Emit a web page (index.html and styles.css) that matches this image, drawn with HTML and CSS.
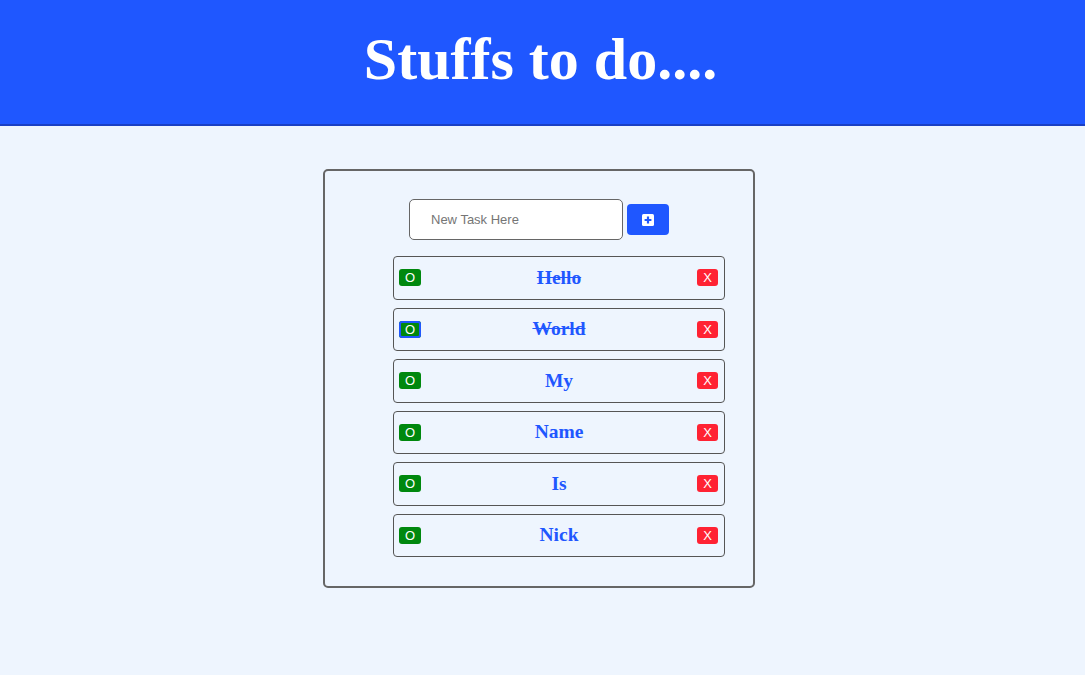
FILE: index.html
```html
<!DOCTYPE html>
<html>
<head>
<meta charset="utf-8">
<title>Stuffs to do</title>
<link rel="stylesheet" href="styles.css">
</head>
<body>
<header class="top">
  <h1 class="title">Stuffs to do....</h1>
</header>
<main class="box">
  <form class="add">
    <input class="task-input" type="text" placeholder="New Task Here">
    <button class="add-btn" type="button" aria-label="add">
      <svg width="12" height="12" viewBox="0 0 12 12"><rect x="0" y="0" width="12" height="12" rx="1.5" fill="#fff"/><path d="M6 2.6v6.8M2.6 6h6.8" stroke="#1f57ff" stroke-width="2.2"/></svg>
    </button>
  </form>
  <ul class="list">
    <li class="item"><button class="done">O</button><span class="label struck">Hello</span><button class="del">X</button></li>
    <li class="item"><button class="done focus">O</button><span class="label struck">World</span><button class="del">X</button></li>
    <li class="item"><button class="done">O</button><span class="label">My</span><button class="del">X</button></li>
    <li class="item"><button class="done">O</button><span class="label">Name</span><button class="del">X</button></li>
    <li class="item"><button class="done">O</button><span class="label">Is</span><button class="del">X</button></li>
    <li class="item"><button class="done">O</button><span class="label">Nick</span><button class="del">X</button></li>
  </ul>
</main>
</body>
</html>
```

FILE: styles.css
```css
html, body {
  margin: 0;
  padding: 0;
}
body {
  background: #eef5fe;
  font-family: "Liberation Serif", "Times New Roman", serif;
  min-height: 675px;
}
.top {
  background: #1f57ff;
  height: 124px;
  border-bottom: 2px solid #1a40c4;
  display: flex;
  align-items: center;
  justify-content: center;
}
.title {
  margin: 0 0 6px 0;
  color: #fff;
  font-size: 60px;
  font-weight: bold;
  line-height: 1;
  transform: translateX(-2px);
}
.box {
  width: 428px;
  margin: 43px 0 0 calc(50% - 219.5px);
  border: 2px solid #666;
  border-radius: 5px;
  padding: 28px 0 28.5px 0;
  box-sizing: content-box;
}
.add {
  display: flex;
  justify-content: center;
  align-items: center;
  gap: 4px;
}
.task-input {
  width: 214px;
  height: 41px;
  box-sizing: border-box;
  border: 1px solid #666;
  border-radius: 5px;
  background: #fff;
  padding: 0 0 0 21px;
  font-family: "Liberation Sans", Arial, sans-serif;
  font-size: 13px;
  outline: none;
}
.task-input::placeholder {
  color: #757575;
}
.add-btn {
  width: 42px;
  height: 31px;
  border: none;
  border-radius: 4px;
  background: #1f57ff;
  display: flex;
  align-items: center;
  justify-content: center;
  padding: 0;
}
.add-btn svg {
  display: block;
}
.list {
  list-style: none;
  margin: 16px 0 0 0;
  padding: 0 0 0 40px;
  display: flex;
  flex-direction: column;
  align-items: center;
  gap: 8px;
}
.item {
  width: 332px;
  height: 43.5px;
  box-sizing: border-box;
  border: 1px solid #555;
  border-radius: 4px;
  display: flex;
  align-items: center;
  justify-content: space-between;
  padding: 0 6px 0 5px;
}
.label {
  color: #1f57ff;
  font-size: 19.5px;
  font-weight: bold;
  flex: 1;
  text-align: center;
}
.struck {
  text-decoration: line-through;
}
.done, .del {
  border: none;
  border-radius: 3px;
  color: #fff;
  font-family: "Liberation Sans", Arial, sans-serif;
  font-size: 13px;
  line-height: 17px;
  height: 17px;
  padding: 0;
  text-align: center;
}
.done {
  width: 22px;
  background: #00880e;
}
.done.focus {
  box-shadow: 0 0 0 2px #1f57ff inset;
}
.del {
  width: 21px;
  background: #ff2233;
}
```
